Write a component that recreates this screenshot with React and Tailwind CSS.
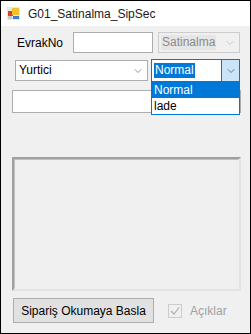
import { ChevronDown } from "lucide-react"

const font = { fontFamily: '"Liberation Sans", Arial, sans-serif' }

function AppIcon() {
  return (
    <svg width="13" height="13" viewBox="0 0 13 13">
      <rect x="0" y="0" width="13" height="13" fill="#e8e8e8" />
      <rect x="1" y="4" width="5" height="5" fill="#d9412b" />
      <rect x="5" y="1" width="7" height="7" fill="#f2c12e" />
      <rect x="6" y="9" width="6" height="3" fill="#3d7bd6" />
      <rect x="1" y="9" width="4" height="3" fill="#c9c9c9" />
    </svg>
  )
}

function Combo({ text, className, disabled }) {
  return (
    <div
      className={`flex items-center h-[21px] border ${
        disabled ? "border-[#cccccc] bg-[#f0f0f0]" : "border-[#adadad] bg-[#ffffff]"
      } ${className}`}
    >
      <span
        className={`ml-[2px] px-[1px] text-[12px] leading-[15px] ${
          disabled ? "text-[#8a8a8a] bg-[#e6e6e6]" : "text-black"
        }`}
      >
        {text}
      </span>
      <ChevronDown
        className={`ml-auto mr-[3px] w-[12px] h-[12px] ${
          disabled ? "text-[#b5b5b5]" : "text-[#606060]"
        }`}
        strokeWidth={1.3}
      />
    </div>
  )
}

export default function App() {
  return (
    <div
      className="w-[251px] h-[334px] border border-black flex flex-col bg-[#f0f0f0] text-black"
      style={font}
    >
      {/* title bar */}
      <div className="h-[25px] bg-white flex items-center pl-[6px] gap-[8px]">
        <AppIcon />
        <span className="text-[12px] text-[#1a1a1a]">G01_Satinalma_SipSec</span>
      </div>

      <div className="relative flex-1 flex flex-col pl-[11px] pr-[9px]">
        {/* row 1 */}
        <div className="flex items-center mt-[6px]">
          <span className="ml-[5px] w-[56px] text-[12px]">EvrakNo</span>
          <div className="w-[80px] h-[21px] border border-[#adadad] bg-white" />
          <Combo text="Satinalma" className="ml-[5px] w-[82px]" disabled />
        </div>

        {/* row 2 */}
        <div className="flex items-center mt-[6px]">
          <Combo text="Yurtici" className="ml-[3px] w-[133px]" />
          <div className="ml-[3px] w-[89px] h-[23px] border border-[#0078d7] bg-white flex items-center">
            <span className="ml-[2px] px-[1px] text-[12px] leading-[15px] bg-[#0078d7] text-white">
              Normal
            </span>
            <div className="ml-auto h-full w-[18px] bg-[#cce4f7] border-l border-[#0078d7] flex items-center justify-center">
              <ChevronDown className="w-[12px] h-[12px] text-[#404040]" strokeWidth={1.3} />
            </div>
          </div>
        </div>

        {/* row 3 */}
        <div className="mt-[8px] h-[23px] border border-[#adadad] bg-white" />

        {/* panel */}
        <div className="mt-[44px] h-[134px] border-2 border-[#a0a0a0] border-b-[#e3e3e3] border-r-[#e3e3e3] bg-[#f0f0f0]">
          <div className="h-full border border-[#f0f0f0] border-t-[#c0c0c0] border-l-[#c0c0c0]" />
        </div>

        {/* bottom row */}
        <div className="flex items-center mt-[7px]">
          <button className="ml-[1px] w-[141px] h-[25px] border border-[#adadad] bg-[#e1e1e1] text-[12px]">
            Sipariş Okumaya Basla
          </button>
          <div className="ml-[14px] w-[14px] h-[14px] border border-[#cccccc] bg-[#f0f0f0] flex items-center justify-center">
            <svg width="10" height="10" viewBox="0 0 10 10">
              <path d="M1 5 L4 8 L9 1.5" fill="none" stroke="#b0b0b0" strokeWidth="1.2" />
            </svg>
          </div>
          <span className="ml-[8px] text-[12px] text-[#a0a0a0]">Açıklar</span>
        </div>

        {/* open dropdown list */}
        <div className="absolute left-[150px] top-[55px] w-[89px] border border-[#0078d7] bg-white flex flex-col">
          <span className="h-[16px] px-[2px] text-[12px] leading-[16px] bg-[#0078d7] text-white">Normal</span>
          <span className="h-[16px] px-[2px] text-[12px] leading-[16px]">lade</span>
        </div>
      </div>
    </div>
  )
}
